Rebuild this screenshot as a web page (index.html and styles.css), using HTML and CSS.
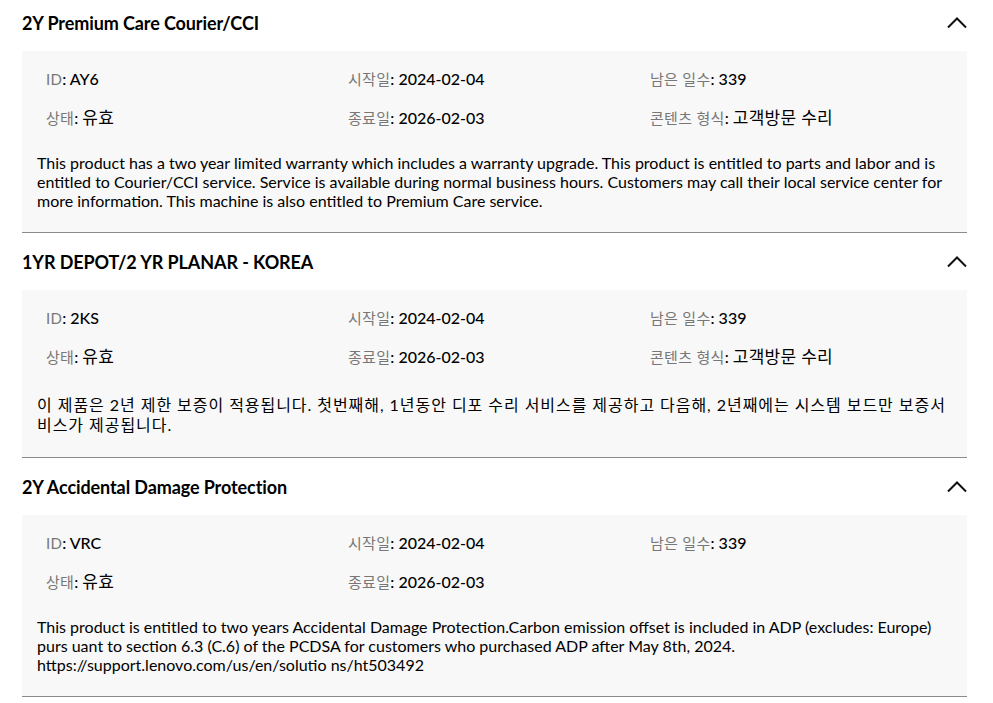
FILE: index.html
```html
<!DOCTYPE html>
<html lang="ko">
<head>
<meta charset="utf-8">
<title>Warranty</title>
<link rel="stylesheet" href="styles.css">
</head>
<body>
<div class="list">
  <section class="item">
    <div class="head">
      <h2 class="title">2Y Premium Care Courier/CCI</h2>
      <svg class="chev" width="20" height="12" viewBox="0 0 20 12"><polyline points="1,10.5 10,1.5 19,10.5" fill="none" stroke="#111" stroke-width="2"/></svg>
    </div>
    <div class="panel">
      <div class="grid">
        <div class="cell"><span class="lab">ID</span><span class="val">: AY6</span></div>
        <div class="cell"><span class="lab">시작일</span><span class="val">: 2024-02-04</span></div>
        <div class="cell"><span class="lab">남은 일수</span><span class="val">: 339</span></div>
        <div class="cell"><span class="lab">상태</span><span class="val">: <span class="ko">유효</span></span></div>
        <div class="cell"><span class="lab">종료일</span><span class="val">: 2026-02-03</span></div>
        <div class="cell"><span class="lab">콘텐츠 형식</span><span class="val">: <span class="ko">고객방문 수리</span></span></div>
      </div>
      <p class="desc">This product has a two year limited warranty which includes a warranty upgrade. This product is entitled to parts and labor and is entitled to Courier/CCI service. Service is available during normal business hours. Customers may call their local service center for more information. This machine is also entitled to Premium Care service.</p>
    </div>
  </section>
  <section class="item">
    <div class="head">
      <h2 class="title">1YR DEPOT/2 YR PLANAR - KOREA</h2>
      <svg class="chev" width="20" height="12" viewBox="0 0 20 12"><polyline points="1,10.5 10,1.5 19,10.5" fill="none" stroke="#111" stroke-width="2"/></svg>
    </div>
    <div class="panel">
      <div class="grid">
        <div class="cell"><span class="lab">ID</span><span class="val">: 2KS</span></div>
        <div class="cell"><span class="lab">시작일</span><span class="val">: 2024-02-04</span></div>
        <div class="cell"><span class="lab">남은 일수</span><span class="val">: 339</span></div>
        <div class="cell"><span class="lab">상태</span><span class="val">: <span class="ko">유효</span></span></div>
        <div class="cell"><span class="lab">종료일</span><span class="val">: 2026-02-03</span></div>
        <div class="cell"><span class="lab">콘텐츠 형식</span><span class="val">: <span class="ko">고객방문 수리</span></span></div>
      </div>
      <p class="desc desc-ko">이 제품은 2년 제한 보증이 적용됩니다. 첫번째해, 1년동안 디포 수리 서비스를 제공하고 다음해, 2년째에는 시스템 보드만 보증서비스가 제공됩니다.</p>
    </div>
  </section>
  <section class="item">
    <div class="head">
      <h2 class="title">2Y Accidental Damage Protection</h2>
      <svg class="chev" width="20" height="12" viewBox="0 0 20 12"><polyline points="1,10.5 10,1.5 19,10.5" fill="none" stroke="#111" stroke-width="2"/></svg>
    </div>
    <div class="panel">
      <div class="grid">
        <div class="cell"><span class="lab">ID</span><span class="val">: VRC</span></div>
        <div class="cell"><span class="lab">시작일</span><span class="val">: 2024-02-04</span></div>
        <div class="cell"><span class="lab">남은 일수</span><span class="val">: 339</span></div>
        <div class="cell"><span class="lab">상태</span><span class="val">: <span class="ko">유효</span></span></div>
        <div class="cell"><span class="lab">종료일</span><span class="val">: 2026-02-03</span></div>
      </div>
      <p class="desc">This product is entitled to two years Accidental Damage Protection.Carbon emission offset is included in ADP (excludes: Europe) purs uant to section 6.3 (C.6) of the PCDSA for customers who purchased ADP after May 8th, 2024. https://support.lenovo.com/us/en/solutio ns/ht503492</p>
    </div>
  </section>
</div>
</body>
</html>
```

FILE: styles.css
```css
html, body {
  margin: 0;
  padding: 0;
  background: #fff;
}
body {
  font-family: Lato, "Noto Sans CJK KR", sans-serif;
  color: #000;
}
.list {
  padding: 0 26px 0 22px;
}
.item {
  border-bottom: 1px solid #8a8a8a;
}
.item + .item {
  padding-top: 6px;
}
.head {
  height: 46px;
  margin-bottom: 5px;
  display: flex;
  align-items: center;
  justify-content: space-between;
}
.title {
  margin: 0;
  font-size: 18px;
  font-weight: 700;
  line-height: 22px;
  letter-spacing: -0.1px;
}
.chev {
  display: block;
}
.panel {
  background: #f8f8f8;
  padding: 17px 15px 22px 15px;
}
.grid {
  display: grid;
  grid-template-columns: repeat(3, 302px);
  row-gap: 17px;
}
.cell {
  padding-left: 9px;
  height: 22px;
  line-height: 22px;
  white-space: nowrap;
}
.lab {
  color: #777;
  font-size: 15px;
  letter-spacing: 0.3px;
}
.val {
  font-size: 16px;
  font-weight: 500;
}
.ko {
  font-weight: 400;
  font-size: 17px;
  letter-spacing: 0.3px;
}
.desc {
  margin: 24px 0 0 0;
  font-size: 16px;
  line-height: 19px;
}
.desc-ko {
  margin-top: 27px;
  line-height: 20px;
  letter-spacing: 0.95px;
}
```
